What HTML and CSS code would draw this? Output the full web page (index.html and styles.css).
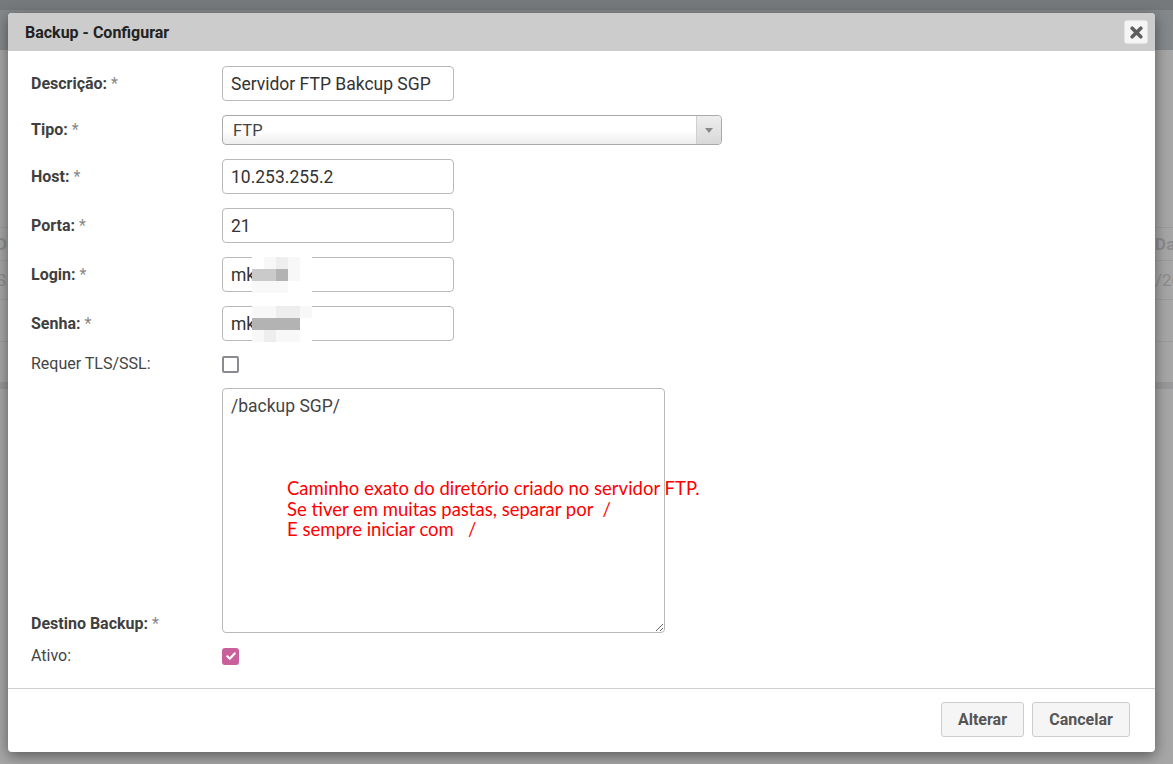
FILE: index.html
```html
<!DOCTYPE html>
<html lang="pt-BR">
<head>
<meta charset="utf-8">
<title>Backup - Configurar</title>
<link rel="stylesheet" href="styles.css">
</head>
<body>
<div class="page" aria-hidden="true">
  <div class="topstrip"></div>
  <div class="navbar"></div>
  <div class="content">
    <div class="tbl-row tbl-first"></div>
    <div class="tbl-row tbl-head"><span>D</span><span>Dat</span></div>
    <div class="tbl-row"><span>S</span><span>/20</span></div>
    <div class="tbl-row tbl-last"></div>
    <div class="tbl-foot"></div>
  </div>
</div>

<div class="dialog">
  <div class="dlg-header">
    <span class="dlg-title">Backup - Configurar</span>
    <button class="dlg-close" type="button" aria-label="Fechar">
      <svg width="13" height="13" viewBox="0 0 13 13"><path d="M2.2 2.2 L10.8 10.8 M10.8 2.2 L2.2 10.8" stroke="#5e5e5e" stroke-width="3.6" stroke-linecap="round"/></svg>
    </button>
  </div>
  <div class="dlg-body">
    <div class="row">
      <label class="lbl req">Descrição: <span class="ast">*</span></label>
      <input class="inp" type="text" value="Servidor FTP Bakcup SGP">
    </div>
    <div class="row">
      <label class="lbl req">Tipo: <span class="ast">*</span></label>
      <div class="select">
        <span class="sel-text">FTP</span>
        <span class="sel-arrow"><span class="tri"></span></span>
      </div>
    </div>
    <div class="row">
      <label class="lbl req">Host: <span class="ast">*</span></label>
      <input class="inp" type="text" value="10.253.255.2">
    </div>
    <div class="row">
      <label class="lbl req">Porta: <span class="ast">*</span></label>
      <input class="inp" type="text" value="21">
    </div>
    <div class="row">
      <label class="lbl req">Login: <span class="ast">*</span></label>
      <div class="inp-wrap">
        <input class="inp" type="text" value="mk">
        <div class="redact">
          <i class="c0"></i><i class="c1"></i><i class="c2"></i><i class="c1"></i><i class="c0"></i>
          <i class="g2"></i><i class="g2"></i><i class="g3"></i><i class="c1"></i><i class="c0"></i>
          <i class="c1"></i><i class="c1"></i><i class="c1"></i><i class="c0"></i><i class="c0"></i>
        </div>
      </div>
    </div>
    <div class="row">
      <label class="lbl req">Senha: <span class="ast">*</span></label>
      <div class="inp-wrap">
        <input class="inp" type="text" value="mk">
        <div class="redact">
          <i class="c1"></i><i class="c1"></i><i class="c2"></i><i class="c2"></i><i class="c1"></i>
          <i class="g3"></i><i class="g3"></i><i class="g3"></i><i class="g3"></i><i class="c0"></i>
          <i class="c1"></i><i class="c2"></i><i class="c1"></i><i class="c1"></i><i class="c0"></i>
        </div>
      </div>
    </div>
    <div class="row row-check">
      <label class="lbl">Requer TLS/SSL:</label>
      <span class="chk"></span>
    </div>
    <div class="row row-area">
      <label class="lbl req">Destino Backup: <span class="ast">*</span></label>
      <div class="area-wrap">
        <textarea class="area">/backup SGP/</textarea>
        <div class="note">Caminho exato do diretório criado no servidor FTP.<br>Se tiver em muitas pastas, separar por&nbsp; /<br>E sempre iniciar com &nbsp; /</div>
      </div>
    </div>
    <div class="row row-check row-last">
      <label class="lbl">Ativo:</label>
      <span class="chk checked">
        <svg width="12" height="12" viewBox="0 0 12 12"><path d="M2.3 6.3 L4.8 8.7 L9.7 3.4" fill="none" stroke="#fff" stroke-width="2.2" stroke-linecap="round" stroke-linejoin="round"/></svg>
      </span>
    </div>
  </div>
  <div class="dlg-footer">
    <button class="btn btn-ok" type="button">Alterar</button>
    <button class="btn btn-cancel" type="button">Cancelar</button>
  </div>
</div>
</body>
</html>
```
FILE: styles.css
```css
* { box-sizing: border-box; }
html, body { margin: 0; padding: 0; }
body {
  width: 1173px;
  height: 764px;
  overflow: hidden;
  font-family: Roboto, "Liberation Sans", sans-serif;
  background: #a6a6a6;
  position: relative;
}

/* dimmed backdrop page */
.page { width: 1173px; height: 764px; display: flex; flex-direction: column; }
.topstrip { height: 10px; background: #76797c; }
.navbar { height: 40px; background: #85888b; }
.content { flex: 1; background: #a6a6a6; padding-top: 133px; }
.tbl-row {
  height: 39px;
  border-bottom: 1px solid #999b9d;
  display: flex;
  justify-content: space-between;
  align-items: center;
  color: #8a8c8e;
  font-size: 17px;
}
.tbl-row span:first-child { margin-left: -4px; }
.tbl-row span:last-child { margin-right: -8px; }
.tbl-first { height: 45px; }
.tbl-head { height: 33px; font-weight: bold; }
.tbl-last { height: 42px; }
.tbl-foot { height: 7px; margin-top: 40px; background: #98989a; }

/* dialog */
.dialog {
  position: absolute;
  left: 8px;
  top: 13px;
  width: 1147px;
  background: #fff;
  border-radius: 4px;
  box-shadow: 0 4px 14px rgba(0,0,0,0.45);
}
.dlg-header {
  height: 38px;
  background: #cccccc;
  border-radius: 4px 4px 0 0;
  display: flex;
  align-items: center;
  justify-content: space-between;
  padding: 0 7px 0 17px;
}
.dlg-title { font-size: 16px; font-weight: bold; color: #222; }
.dlg-close {
  width: 24px;
  height: 24px;
  padding: 0;
  border: 1px solid #e4e4e4;
  border-radius: 3px;
  background: #f5f5f5;
  display: flex;
  align-items: center;
  justify-content: center;
}

.dlg-body { padding: 15px 23px 23px 23px; }
.row { display: flex; align-items: center; margin-bottom: 14px; }
.row-last { margin-bottom: 0; }
.lbl {
  width: 191px;
  flex: none;
  font-size: 16px;
  color: #444;
  line-height: 20px;
}
.lbl.req { font-weight: bold; color: #3f3f3f; }
.ast { font-weight: normal; color: #888; }

.inp {
  width: 232px;
  height: 35px;
  border: 1px solid #b9b9b9;
  border-radius: 4px;
  padding: 0 8px;
  font-family: Roboto, "Liberation Sans", sans-serif;
  font-size: 17.5px;
  color: #333;
  background: #fff;
  outline: none;
}
.inp-wrap { position: relative; width: 232px; height: 35px; }
.redact {
  position: absolute;
  left: 30px;
  top: 0;
  width: 60px;
  height: 36px;
  display: grid;
  grid-template-columns: repeat(5, 12px);
  grid-template-rows: repeat(3, 12px);
}
.redact i { display: block; }
.redact .c0 { background: #ffffff; }
.redact .c1 { background: #f8f8f8; }
.redact .c2 { background: #eeeeee; }
.redact .g2 { background: #cacaca; }
.redact .g3 { background: #b3b3b3; }

.select {
  width: 500px;
  height: 30px;
  border: 1px solid #aaa;
  border-radius: 4px;
  background: linear-gradient(#ffffff 50%, #eeeeee);
  display: flex;
  align-items: center;
  justify-content: space-between;
}
.sel-text { padding-left: 10px; font-size: 16.5px; color: #444; }
.sel-arrow {
  width: 25px;
  height: 28px;
  border-left: 1px solid #cfcfcf;
  background: linear-gradient(#eeeeee, #d8d8d8);
  border-radius: 0 4px 4px 0;
  display: flex;
  align-items: center;
  justify-content: center;
}
.tri {
  width: 0; height: 0;
  border-left: 4.5px solid transparent;
  border-right: 4.5px solid transparent;
  border-top: 5px solid #888;
}

.row-check { height: 18px; }
.row-check .lbl { font-weight: normal; }
.chk {
  width: 17px;
  height: 17px;
  border: 2px solid #8a8a90;
  border-radius: 2px;
  display: flex;
  align-items: center;
  justify-content: center;
}
.chk.checked { background: #c9609b; border-color: #c9609b; border-radius: 3px; }

.row-area { align-items: flex-end; margin-bottom: 14px; margin-top: 15px; }
.row-area .lbl { line-height: 18px; }
.area-wrap { position: relative; width: 443px; height: 245px; }
.area {
  width: 443px;
  height: 245px;
  border: 1px solid #b9b9b9;
  border-radius: 4px;
  padding: 5px 8px;
  font-family: Roboto, "Liberation Sans", sans-serif;
  font-size: 17.5px;
  line-height: 24px;
  color: #444;
  resize: both;
  outline: none;
  display: block;
}
.note {
  position: absolute;
  left: 65px;
  top: 90px;
  color: #ff0000;
  font-family: Lato, "Open Sans", sans-serif;
  font-size: 18.5px;
  line-height: 20.5px;
  white-space: nowrap;
}

.dlg-footer {
  border-top: 1px solid #cfcfcf;
  padding: 13px 25px 15px 0;
  display: flex;
  justify-content: flex-end;
  gap: 8px;
}
.btn {
  height: 35px;
  padding: 0;
  border: 1px solid #cdcdcd;
  border-radius: 3px;
  background: #f5f5f5;
  font-family: Roboto, "Liberation Sans", sans-serif;
  font-size: 16px;
  font-weight: bold;
  color: #555;
}
.btn-ok { width: 83px; }
.btn-cancel { width: 98px; }
```
